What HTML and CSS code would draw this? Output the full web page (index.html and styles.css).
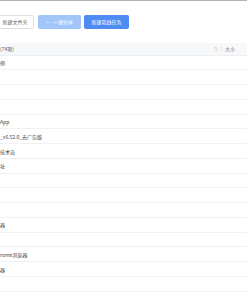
FILE: index.html
```html
<!DOCTYPE html>
<html lang="zh">
<head>
<meta charset="utf-8">
<link rel="stylesheet" href="styles.css">
</head>
<body>
<div class="topline"></div>
<div class="toolbar">
  <button class="btn btn-default">新建文件夹</button>
  <button class="btn btn-light"><svg class="share-ico" viewBox="0 0 10 10" width="5" height="5"><path d="M2 6 Q5 1 8 6" fill="none" stroke="#fff" stroke-width="1.2"/></svg>一键分享</button>
  <button class="btn btn-primary">新建离线任务</button>
</div>
<div class="table">
  <div class="thead">
    <span class="col-name">(74项)</span>
    <span class="sort">⇅</span>
    <span class="sep"></span>
    <span class="col-size">大小</span>
  </div>
  <div class="row">例</div>
  <div class="row"></div>
  <div class="row"></div>
  <div class="row"></div>
  <div class="row">App</div>
  <div class="row">_v6.52.0_去广告版</div>
  <div class="row">技术员</div>
  <div class="row">址</div>
  <div class="row"></div>
  <div class="row"></div>
  <div class="row"></div>
  <div class="row">器</div>
  <div class="row"></div>
  <div class="row">rome浏览器</div>
  <div class="row">器</div>
  <div class="row"></div>
  <div class="row"></div>
</div>
</body>
</html>
```
FILE: styles.css
```css
* { box-sizing: border-box; }
html, body {
  margin: 0;
  padding: 0;
  background: #fff;
  font-family: "Noto Sans CJK SC", "Noto Sans", sans-serif;
  overflow: hidden;
}
.topline {
  height: 1px;
  background: #b3b3b3;
}
.toolbar {
  display: flex;
  gap: 3.5px;
  margin-top: 14px;
  margin-left: -4px;
  height: 14px;
}
.btn {
  height: 14px;
  border-radius: 1.5px;
  font-family: inherit;
  font-size: 5px;
  line-height: 12px;
  padding: 0;
  display: flex;
  align-items: center;
  justify-content: center;
  border: 1px solid transparent;
}
.btn-default {
  width: 38px;
  background: #fff;
  border-color: #dcdfe6;
  color: #666;
}
.btn-light {
  width: 43px;
  background: #a2c5fa;
  border-color: #a2c5fa;
  color: #fff;
  gap: 3px;
}
.share-ico { display: block; }
.btn-primary {
  width: 45px;
  background: #4e8bf2;
  border-color: #4e8bf2;
  color: #fff;
}
.table {
  margin-top: 13.7px;
}
.thead {
  height: 13px;
  background: #f7f8fa;
  border-bottom: 1px solid #eceef2;
  display: flex;
  align-items: center;
  font-size: 5px;
  color: #555;
}
.col-name { flex: 1; }
.sort {
  font-size: 4px;
  color: #bbb;
  margin-right: 3px;
}
.sep {
  width: 1px;
  height: 6px;
  background: #e3e3e3;
  margin-right: 3px;
}
.col-size {
  width: 22px;
  color: #666;
}
.row {
  height: 14.75px;
  border-bottom: 1px solid #f0f1f3;
  display: flex;
  align-items: center;
  font-size: 5px;
  color: #444;
}
```
